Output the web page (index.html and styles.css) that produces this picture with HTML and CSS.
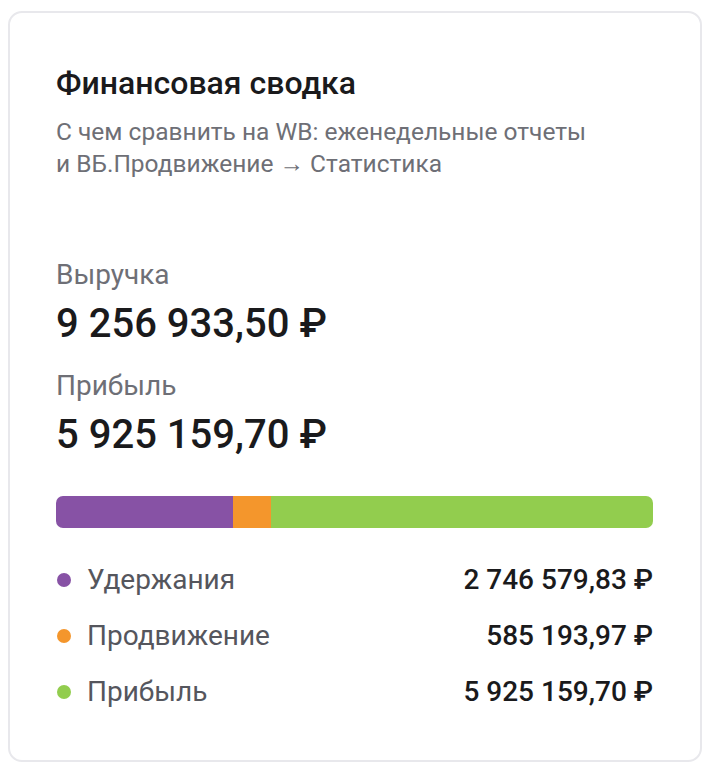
FILE: index.html
```html
<!doctype html>
<html>
	<head>
		<title>Финансовая сводка</title>
		<link rel="stylesheet" href="styles.css">
	</head>
	<body>
		<div class="card">
			<div class="cardTitle">Финансовая сводка</div>
			<div class="cardHint">С чем сравнить на WB: еженедельные отчеты<br>и ВБ.Продвижение → Статистика</div>

			<div class="metric">
				<div class="metricLabel">Выручка</div>
				<div class="metricValue">9 256 933,50 ₽</div>
			</div>
			<div class="metric">
				<div class="metricLabel">Прибыль</div>
				<div class="metricValue">5 925 159,70 ₽</div>
			</div>

			<div class="bar">
				<div class="barPart partHold" style="width: 29.67%"></div>
				<div class="barPart partPromo" style="width: 6.32%"></div>
				<div class="barPart partProfit" style="width: 64.01%"></div>
			</div>

			<div class="legend">
				<div class="legendRow">
					<span class="dot partHold"></span>
					<span class="legendName">Удержания</span>
					<span class="legendValue">2 746 579,83 ₽</span>
				</div>
				<div class="legendRow">
					<span class="dot partPromo"></span>
					<span class="legendName">Продвижение</span>
					<span class="legendValue">585 193,97 ₽</span>
				</div>
				<div class="legendRow">
					<span class="dot partProfit"></span>
					<span class="legendName">Прибыль</span>
					<span class="legendValue">5 925 159,70 ₽</span>
				</div>
			</div>
		</div>
	</body>
</html>
```

FILE: styles.css
```css
body {
	margin: 0;
	padding: 11px 10px 12px 8px;
	background: #ffffff;
	font-family: Roboto, "Noto Sans", sans-serif;
	color: #1a1a1c;
}

.card {
	box-sizing: border-box;
	height: 751px;
	border: 2px solid #e8e8ec;
	border-radius: 14px;
	padding: 50px 47px 0 46px;
}

.cardTitle {
	font-size: 32px;
	font-weight: 500;
	line-height: 40px;
}

.cardHint {
	margin-top: 13px;
	font-size: 24.5px;
	line-height: 32px;
	color: #6e6f76;
}

.metric {
	margin-top: 22px;
}

.cardHint + .metric {
	margin-top: 78px;
}

.metricLabel {
	font-size: 28px;
	line-height: 34px;
	color: #6e6f76;
}

.metricValue {
	margin-top: 9px;
	font-size: 40px;
	font-weight: 500;
	line-height: 46px;
}

.bar {
	display: flex;
	height: 32px;
	margin-top: 38px;
	border-radius: 7px;
	overflow: hidden;
}

.partHold {
	background: #8752a5;
}

.partPromo {
	background: #f4962c;
}

.partProfit {
	background: #92cd4e;
}

.legend {
	margin-top: 33px;
	display: flex;
	flex-direction: column;
	gap: 20px;
}

.legendRow {
	display: flex;
	align-items: center;
	height: 36px;
	font-size: 28px;
}

.dot {
	width: 14px;
	height: 14px;
	border-radius: 50%;
	margin: 2px 16px 0 1px;
}

.legendName {
	flex: 1;
	color: #55565d;
}

.legendValue {
	font-weight: 500;
	color: #1a1a1c;
}
```
